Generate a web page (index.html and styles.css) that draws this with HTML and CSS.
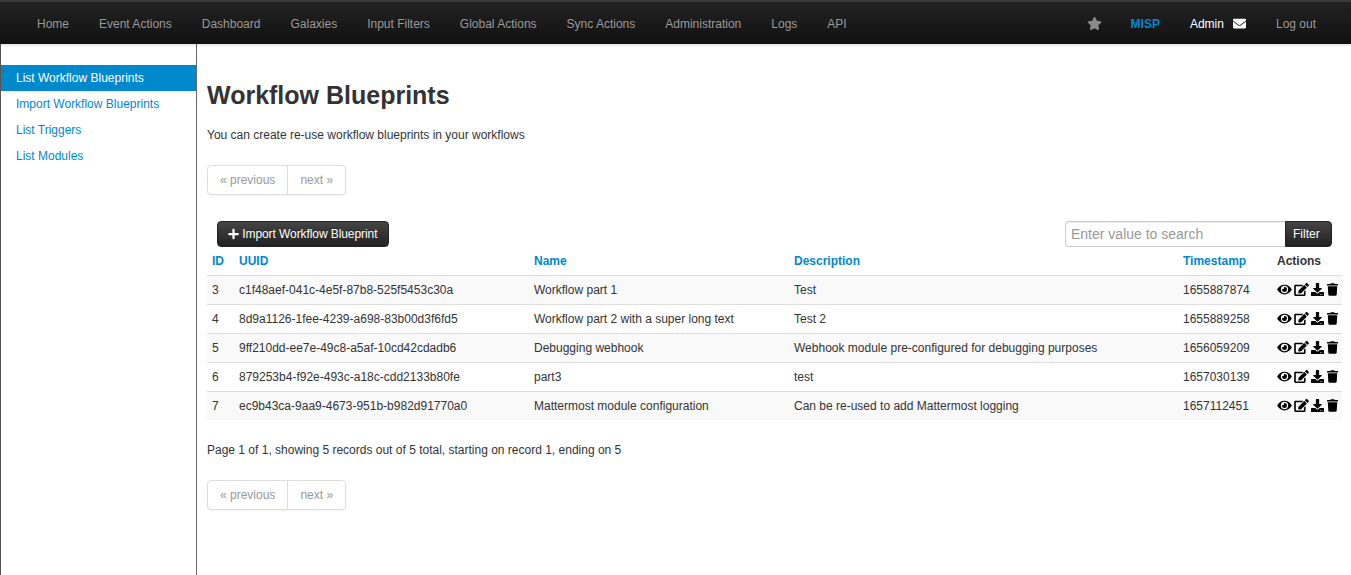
FILE: index.html
```html
<!DOCTYPE html>
<html>
<head>
  <meta charset="UTF-8">
  <title>Workflow Blueprints</title>
  <link rel="stylesheet" href="styles.css">
</head>
<body>
  <svg class="defs" width="0" height="0">
    <symbol id="i-star" viewBox="0 0 576 512"><path d="M259.3 17.8L194 150.2 47.9 171.5c-26.2 3.8-36.7 36.1-17.7 54.6l105.7 103-25 145.5c-4.5 26.3 23.2 46 46.4 33.7L288 439.6l130.7 68.7c23.2 12.2 50.9-7.4 46.4-33.7l-25-145.5 105.7-103c19-18.5 8.5-50.8-17.7-54.6L382 150.2 316.7 17.8c-11.7-23.6-45.6-23.9-57.4 0z"/></symbol>
    <symbol id="i-envelope" viewBox="0 0 512 512"><path d="M502.3 190.8c3.9-3.1 9.7-.2 9.7 4.7V400c0 26.5-21.5 48-48 48H48c-26.5 0-48-21.5-48-48V195.6c0-5 5.7-7.8 9.7-4.7 22.4 17.4 52.1 39.5 154.1 113.6 21.1 15.4 56.7 47.8 92.2 47.6 35.7.3 72-32.8 92.3-47.6 102-74.1 131.6-96.3 154-113.7zM256 320c23.2.4 56.6-29.2 73.4-41.4 132.7-96.3 142.8-104.7 173.4-128.7 5.8-4.5 9.2-11.5 9.2-18.9v-19c0-26.5-21.5-48-48-48H48C21.5 64 0 85.5 0 112v19c0 7.4 3.4 14.3 9.2 18.9 30.6 23.9 40.7 32.4 173.4 128.7 16.8 12.2 50.2 41.8 73.4 41.4z"/></symbol>
    <symbol id="i-plus" viewBox="0 0 448 512"><path d="M416 208H272V64c0-17.67-14.33-32-32-32h-32c-17.67 0-32 14.33-32 32v144H32c-17.67 0-32 14.33-32 32v32c0 17.67 14.33 32 32 32h144v144c0 17.67 14.33 32 32 32h32c17.67 0 32-14.33 32-32V304h144c17.67 0 32-14.33 32-32v-32c0-17.67-14.33-32-32-32z"/></symbol>
    <symbol id="i-eye" viewBox="0 0 576 512"><path d="M572.52 241.4C518.29 135.59 410.93 64 288 64S57.68 135.64 3.48 241.41a32.35 32.35 0 0 0 0 29.19C57.71 376.41 165.07 448 288 448s230.32-71.64 284.52-177.41a32.35 32.35 0 0 0 0-29.19zM288 400a144 144 0 1 1 144-144 143.93 143.93 0 0 1-144 144zm0-240a95.31 95.31 0 0 0-25.31 3.79 47.85 47.85 0 0 1-66.9 66.9A95.78 95.78 0 1 0 288 160z"/></symbol>
    <symbol id="i-edit" viewBox="0 0 576 512"><path d="M402.6 83.2l90.2 90.2c3.8 3.8 3.8 10 0 13.8L274.4 405.6l-92.8 10.3c-12.4 1.4-22.9-9.1-21.5-21.5l10.3-92.8L388.8 83.2c3.8-3.8 10-3.8 13.8 0zm162-22.9l-48.8-48.8c-15.2-15.2-39.9-15.2-55.2 0l-35.4 35.4c-3.8 3.8-3.8 10 0 13.8l90.2 90.2c3.8 3.8 10 3.8 13.8 0l35.4-35.4c15.2-15.3 15.2-40 0-55.2zM384 346.2V448H64V128h229.8c3.2 0 6.2-1.3 8.5-3.5l40-40c7.6-7.6 2.2-20.5-8.5-20.5H48C21.5 64 0 85.5 0 112v352c0 26.5 21.5 48 48 48h352c26.5 0 48-21.5 48-48V306.2c0-10.7-12.9-16-20.5-8.5l-40 40c-2.2 2.3-3.5 5.3-3.5 8.5z"/></symbol>
    <symbol id="i-download" viewBox="0 0 512 512"><path d="M216 0h80c13.3 0 24 10.7 24 24v168h87.7c17.8 0 26.7 21.5 14.1 34.1L269.7 378.3c-7.5 7.5-19.8 7.5-27.3 0L90.1 226.1c-12.6-12.6-3.7-34.1 14.1-34.1H192V24c0-13.3 10.7-24 24-24zm296 376v112c0 13.3-10.7 24-24 24H24c-13.3 0-24-10.7-24-24V376c0-13.3 10.7-24 24-24h146.7l49 49c20.1 20.1 52.5 20.1 72.6 0l49-49H488c13.3 0 24 10.7 24 24zm-124 88c0-11-9-20-20-20s-20 9-20 20 9 20 20 20 20-9 20-20zm64 0c0-11-9-20-20-20s-20 9-20 20 9 20 20 20 20-9 20-20z"/></symbol>
    <symbol id="i-trash" viewBox="0 0 448 512"><path d="M432 32H312l-9.4-18.7A24 24 0 0 0 281.1 0H166.8a23.72 23.72 0 0 0-21.4 13.3L136 32H16A16 16 0 0 0 0 48v32a16 16 0 0 0 16 16h416a16 16 0 0 0 16-16V48a16 16 0 0 0-16-16zM53.2 467a48 48 0 0 0 47.9 45h245.8a48 48 0 0 0 47.9-45L416 128H32z"/></symbol>
  </svg>

  <nav class="navbar">
    <ul class="nav-left">
      <li><a href="#">Home</a></li>
      <li><a href="#">Event Actions</a></li>
      <li><a href="#">Dashboard</a></li>
      <li><a href="#">Galaxies</a></li>
      <li><a href="#">Input Filters</a></li>
      <li><a href="#">Global Actions</a></li>
      <li><a href="#">Sync Actions</a></li>
      <li><a href="#">Administration</a></li>
      <li><a href="#">Logs</a></li>
      <li><a href="#">API</a></li>
    </ul>
    <div class="nav-right">
      <a href="#" class="nav-star"><svg class="icon-star"><use href="#i-star"/></svg></a>
      <a href="#" class="nav-org">MISP</a>
      <a href="#" class="nav-user">Admin <svg class="icon-mail"><use href="#i-envelope"/></svg></a>
      <a href="#" class="nav-logout">Log out</a>
    </div>
  </nav>

  <div class="page">
    <aside class="sidebar">
      <ul>
        <li class="active"><a href="#">List Workflow Blueprints</a></li>
        <li><a href="#">Import Workflow Blueprints</a></li>
        <li><a href="#">List Triggers</a></li>
        <li><a href="#">List Modules</a></li>
      </ul>
    </aside>

    <main class="content">
      <h2>Workflow Blueprints</h2>
      <p class="intro">You can create re-use workflow blueprints in your workflows</p>

      <div class="pagination">
        <span>« previous</span><span>next »</span>
      </div>

      <div class="toolbar">
        <button class="btn-dark btn-import"><svg class="icon-plus"><use href="#i-plus"/></svg> Import Workflow Blueprint</button>
        <div class="search">
          <input type="text" placeholder="Enter value to search">
          <button class="btn-dark btn-filter">Filter</button>
        </div>
      </div>

      <table>
        <thead>
          <tr>
            <th class="c-id"><a href="#">ID</a></th>
            <th class="c-uuid"><a href="#">UUID</a></th>
            <th class="c-name"><a href="#">Name</a></th>
            <th class="c-desc"><a href="#">Description</a></th>
            <th class="c-time"><a href="#">Timestamp</a></th>
            <th class="c-actions">Actions</th>
          </tr>
        </thead>
        <tbody>
          <tr>
            <td>3</td><td>c1f48aef-041c-4e5f-87b8-525f5453c30a</td><td>Workflow part 1</td><td>Test</td><td>1655887874</td>
            <td class="actions"><svg class="i-eye"><use href="#i-eye"/></svg><svg class="i-edit"><use href="#i-edit"/></svg><svg class="i-down"><use href="#i-download"/></svg><svg class="i-trash"><use href="#i-trash"/></svg></td>
          </tr>
          <tr>
            <td>4</td><td>8d9a1126-1fee-4239-a698-83b00d3f6fd5</td><td>Workflow part 2 with a super long text</td><td>Test 2</td><td>1655889258</td>
            <td class="actions"><svg class="i-eye"><use href="#i-eye"/></svg><svg class="i-edit"><use href="#i-edit"/></svg><svg class="i-down"><use href="#i-download"/></svg><svg class="i-trash"><use href="#i-trash"/></svg></td>
          </tr>
          <tr>
            <td>5</td><td>9ff210dd-ee7e-49c8-a5af-10cd42cdadb6</td><td>Debugging webhook</td><td>Webhook module pre-configured for debugging purposes</td><td>1656059209</td>
            <td class="actions"><svg class="i-eye"><use href="#i-eye"/></svg><svg class="i-edit"><use href="#i-edit"/></svg><svg class="i-down"><use href="#i-download"/></svg><svg class="i-trash"><use href="#i-trash"/></svg></td>
          </tr>
          <tr>
            <td>6</td><td>879253b4-f92e-493c-a18c-cdd2133b80fe</td><td>part3</td><td>test</td><td>1657030139</td>
            <td class="actions"><svg class="i-eye"><use href="#i-eye"/></svg><svg class="i-edit"><use href="#i-edit"/></svg><svg class="i-down"><use href="#i-download"/></svg><svg class="i-trash"><use href="#i-trash"/></svg></td>
          </tr>
          <tr>
            <td>7</td><td>ec9b43ca-9aa9-4673-951b-b982d91770a0</td><td>Mattermost module configuration</td><td>Can be re-used to add Mattermost logging</td><td>1657112451</td>
            <td class="actions"><svg class="i-eye"><use href="#i-eye"/></svg><svg class="i-edit"><use href="#i-edit"/></svg><svg class="i-down"><use href="#i-download"/></svg><svg class="i-trash"><use href="#i-trash"/></svg></td>
          </tr>
        </tbody>
      </table>

      <p class="counter">Page 1 of 1, showing 5 records out of 5 total, starting on record 1, ending on 5</p>

      <div class="pagination pagination-bottom">
        <span>« previous</span><span>next »</span>
      </div>
    </main>
  </div>
</body>
</html>
```

FILE: styles.css
```css
* {
  box-sizing: border-box;
}

html,
body {
  height: 100%;
}

body {
  margin: 0;
  font-family: "Liberation Sans", Arial, sans-serif;
  font-size: 12px;
  line-height: 20px;
  color: #333;
  background-color: #fff;
  display: flex;
  flex-direction: column;
  overflow: hidden;
}

a {
  text-decoration: none;
}

ul {
  list-style: none;
  margin: 0;
  padding: 0;
}

.defs {
  display: block;
  height: 0;
}

svg {
  fill: currentColor;
}

/* top bar */
.navbar {
  flex: none;
  height: 44px;
  padding: 3px 20px 0 22px;
  display: flex;
  justify-content: space-between;
  background: linear-gradient(to bottom, #3a3a3a 0, #3a3a3a 2px, #222 2px, #111 100%);
  box-shadow: 0 1px 3px rgba(0, 0, 0, .15);
  position: relative;
}

.nav-left {
  display: flex;
}

.nav-left a,
.nav-right a {
  display: flex;
  align-items: center;
  height: 41px;
  color: #999;
}

.nav-left a {
  padding: 0 15px;
}

.nav-right {
  display: flex;
}

.nav-right .nav-star {
  padding-right: 29px;
  color: #8a8a8a;
}

.icon-star {
  width: 15px;
  height: 13px;
}

.nav-right .nav-org {
  color: #0088cc;
  font-weight: bold;
  padding-right: 30px;
}

.nav-right .nav-user {
  color: #fff;
  padding-right: 30px;
}

.icon-mail {
  width: 13px;
  height: 13px;
  margin-left: 9px;
}

.nav-logout {
  padding-right: 15px;
}

/* sidebar and main */
.page {
  flex: 1;
  display: flex;
  min-height: 0;
  border-left: 1px solid #555;
}

.sidebar {
  flex: none;
  width: 196px;
  padding-top: 21px;
  border-right: 1px solid #666;
}

.sidebar a {
  display: block;
  height: 26px;
  line-height: 26px;
  padding-left: 15px;
  color: #0088cc;
}

.sidebar .active a {
  background-color: #0088cc;
  color: #fff;
}

.content {
  flex: 1;
  min-width: 0;
  padding: 0 9px 0 10px;
}

h2 {
  margin: 31px 0 0;
  font-size: 25px;
  line-height: 40px;
  font-weight: bold;
}

.intro {
  margin: 10px 0 0;
}

.pagination {
  display: inline-flex;
  margin-top: 20px;
  height: 30px;
  border: 1px solid #ddd;
  border-radius: 4px;
  box-shadow: 0 1px 2px rgba(0, 0, 0, .05);
  color: #999;
  line-height: 28px;
  vertical-align: top;
}

.pagination span {
  padding: 0 12px;
}

.pagination span + span {
  border-left: 1px solid #ddd;
}

.toolbar {
  display: flex;
  justify-content: space-between;
  padding: 0 10px;
  margin-top: 26px;
  height: 26px;
}

.btn-dark {
  height: 26px;
  border: 1px solid #222;
  border-radius: 4px;
  background: linear-gradient(to bottom, #444, #222);
  color: #fff;
  font-family: inherit;
  font-size: 12px;
  text-shadow: 0 -1px 0 rgba(0, 0, 0, .25);
  padding: 0 10px;
}

.btn-import {
  width: 172px;
  display: flex;
  align-items: center;
  white-space: pre;
  letter-spacing: -.08px;
}

.icon-plus {
  width: 11px;
  height: 12px;
  flex: none;
}

.search {
  display: flex;
}

.search input {
  width: 220px;
  height: 26px;
  border: 1px solid #ccc;
  border-right: 0;
  border-radius: 4px 0 0 4px;
  padding: 0 5px;
  font-family: inherit;
  font-size: 14px;
  box-shadow: inset 0 1px 1px rgba(0, 0, 0, .075);
}

.search input::placeholder {
  color: #999;
}

.btn-filter {
  width: 47px;
  padding: 0 13px 0 7px;
  border-radius: 0 4px 4px 0;
}

/* table */
table {
  width: 100%;
  table-layout: fixed;
  border-collapse: collapse;
  margin-top: 2px;
}

th,
td {
  padding: 0 5px;
  text-align: left;
  white-space: nowrap;
}

th {
  height: 26px;
  padding-bottom: 2px;
  font-weight: bold;
  border-bottom: 1px solid #ddd;
}

th a {
  color: #0088cc;
}

td {
  height: 29px;
  border-bottom: 1px solid #ddd;
}

tbody tr:nth-child(odd) td {
  background-color: #f9f9f9;
}

tbody tr:last-child td {
  border-bottom: 0;
}

.c-id {
  width: 27px;
}

.c-uuid {
  width: 295px;
}

.c-name {
  width: 260px;
}

.c-desc {
  width: 389px;
}

.c-time {
  width: 94px;
}

.c-actions {
  width: 70px;
}

.actions {
  color: #000;
  line-height: 0;
}

.actions svg {
  height: 13px;
  vertical-align: middle;
  margin-right: 2px;
}

.i-eye,
.i-edit {
  width: 15px;
}

.actions .i-down {
  width: 13px;
  margin-right: 3px;
}

.i-trash {
  width: 11px;
}

.counter {
  margin: 20px 0 0;
}
```
